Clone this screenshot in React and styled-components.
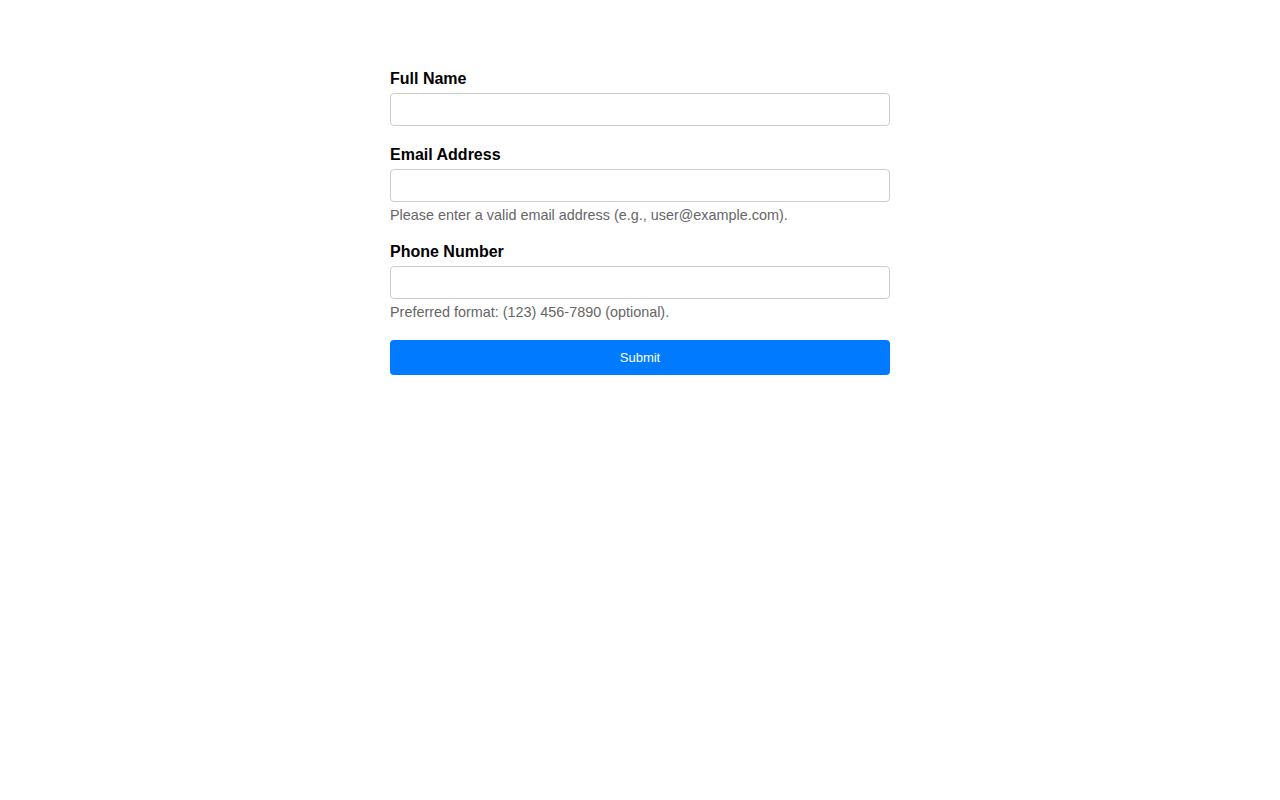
import React from 'react';
import styled, { createGlobalStyle } from 'styled-components';

const GlobalStyle = createGlobalStyle`
  body {
    margin: 0;
    background: #fff;
    font-family: "Liberation Sans", Arial, Helvetica, sans-serif;
  }
`;

const StyledPage = styled.div`
  display: flex;
  justify-content: center;
  padding-top: 70px;
`;

const StyledForm = styled.form`
  width: 500px;
  display: flex;
  flex-direction: column;
`;

const StyledGroup = styled.div`
  display: flex;
  flex-direction: column;
  margin-bottom: 20px;
`;

const StyledLabel = styled.label`
  font-size: 16px;
  font-weight: bold;
  color: #000;
  margin-bottom: 5px;
`;

const StyledInput = styled.input`
  box-sizing: border-box;
  width: 100%;
  height: 33px;
  padding: 8px;
  border: 1px solid #ccc;
  border-radius: 4px;
  font-size: 14px;
  font-family: inherit;
  outline: none;
`;

const StyledHelp = styled.small`
  font-size: 14.4px;
  color: #666;
  margin-top: 5px;
`;

const StyledButton = styled.button`
  height: 35px;
  border: 0;
  border-radius: 4px;
  background-color: #007bff;
  color: #fff;
  font-size: 13px;
  font-family: inherit;
  cursor: pointer;
`;

const fields = [
  { id: 'name', label: 'Full Name', type: 'text' },
  {
    id: 'email',
    label: 'Email Address',
    type: 'email',
    help: 'Please enter a valid email address (e.g., user@example.com).',
  },
  {
    id: 'phone',
    label: 'Phone Number',
    type: 'tel',
    help: 'Preferred format: (123) 456-7890 (optional).',
  },
];

const App = () => (
  <>
    <GlobalStyle />
    <StyledPage>
      <StyledForm onSubmit={(e) => e.preventDefault()}>
        {fields.map(({ id, label, type, help }) => (
          <StyledGroup key={id}>
            <StyledLabel htmlFor={id}>{label}</StyledLabel>
            <StyledInput id={id} type={type} />
            {help && <StyledHelp>{help}</StyledHelp>}
          </StyledGroup>
        ))}
        <StyledButton type="submit">Submit</StyledButton>
      </StyledForm>
    </StyledPage>
  </>
);

export default App;
